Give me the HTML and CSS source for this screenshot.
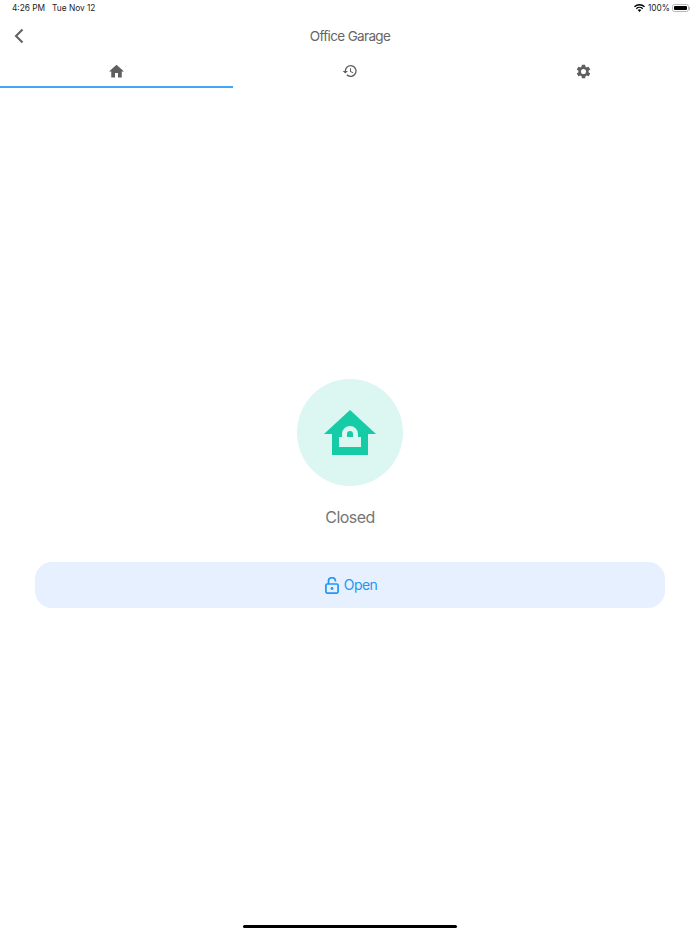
FILE: index.html
```html
<!DOCTYPE html>
<html lang="en">
<head>
    <meta charset="UTF-8">
    <meta name="viewport" content="width=device-width, initial-scale=1.0">
    <title>Office Garage</title>
    <link rel="stylesheet" href="styles.css">
</head>
<body>
<div class="screen">
    <div class="status-bar">
        <div class="status-left">
            <span>4:26 PM</span>
            <span>Tue Nov 12</span>
        </div>
        <div class="status-right">
            <svg class="wifi" width="11" height="8" viewBox="0 0 22 16">
                <path d="M11 16 7.4 12.2a5.2 5.2 0 0 1 7.2 0Z" fill="#000"/>
                <path d="M5.6 10.3 3.7 8.3a10.6 10.6 0 0 1 14.6 0l-1.9 2a7.8 7.8 0 0 0-10.8 0Z" fill="#000"/>
                <path d="M1.9 6.4 0 4.400a16 16 0 0 1 22 0l-1.9 2a13.3 13.3 0 0 0-18.2 0Z" fill="#000"/>
            </svg>
            <span>100%</span>
            <div class="battery"><div class="battery-fill"></div></div>
            <div class="battery-nub"></div>
        </div>
    </div>

    <header class="top-bar">
        <button class="back-button" aria-label="Back">
            <svg width="12" height="16" viewBox="0 0 12 16" fill="none">
                <path d="M9.500 1.500 3 8l6.500 6.500" stroke="#5f5f5f" stroke-width="2"/>
            </svg>
        </button>
        <h1>Office Garage</h1>
    </header>

    <nav class="tabs">
        <div class="tab active">
            <svg width="15" height="15" viewBox="2 3 20 18"><path d="M10 20v-6h4v6h5v-8h3L12 3 2 12h3v8z" fill="#5f5f5f"/></svg>
        </div>
        <div class="tab">
            <svg width="16" height="16" viewBox="0 0 24 24"><path d="M13 3a9 9 0 0 0-9 9H1l3.900 3.900L9 12H6a7 7 0 1 1 2.050 4.950l-1.420 1.420A9 9 0 1 0 13 3Zm-1 5v5l4.280 2.540.72-1.210-3.500-2.080V8Z" fill="#5f5f5f"/></svg>
        </div>
        <div class="tab">
            <svg width="17" height="17" viewBox="0 0 24 24"><path d="M19.140 12.940a7.100 7.100 0 0 0 0-1.880l2.030-1.580a.5.5 0 0 0 .12-.64l-1.920-3.320a.5.5 0 0 0-.61-.22l-2.390.96a7 7 0 0 0-1.620-.94l-.36-2.540a.5.5 0 0 0-.49-.42h-3.840a.5.5 0 0 0-.49.42l-.36 2.540a7.300 7.300 0 0 0-1.620.94l-2.390-.96a.5.5 0 0 0-.61.22L2.710 8.840a.5.5 0 0 0 .12.64l2.030 1.580a7.100 7.100 0 0 0 0 1.880l-2.030 1.580a.5.5 0 0 0-.12.64l1.920 3.320c.13.22.39.3.61.22l2.390-.96c.5.38 1.040.7 1.620.94l.36 2.540c.05.24.25.42.49.42h3.840c.24 0 .44-.18.49-.42l.36-2.540a7.300 7.300 0 0 0 1.620-.94l2.390.96c.22.08.48 0 .61-.22l1.920-3.320a.5.5 0 0 0-.12-.64ZM12 15.600a3.600 3.600 0 1 1 0-7.200 3.600 3.600 0 0 1 0 7.200Z" fill="#5f5f5f"/></svg>
        </div>
    </nav>

    <main class="door-panel">
        <div class="door-circle">
            <svg width="54" height="46" viewBox="0 0 54 46">
                <path fill-rule="evenodd" fill="#16cca6" d="M27 0 53 24H45V45H9V24H1ZM16 37V27H19V24A8 8 0 0 1 35 24V27H38V37ZM24 27H30V24A3 3 0 0 0 24 24Z"/>
            </svg>
        </div>
        <p class="door-state">Closed</p>
        <button class="open-button">
            <svg width="14" height="17" viewBox="0 0 14 17" fill="none">
                <path d="M3.500 7V4.400A3.500 3.500 0 0 1 10.400 3.400V4.400" stroke="#2196f3" stroke-width="1.700"/>
                <rect x="0.900" y="7" width="12.200" height="9.100" rx="1.300" stroke="#2196f3" stroke-width="1.700"/>
                <circle cx="7" cy="11.500" r="1.400" fill="#2196f3"/>
            </svg>
            <span class="open-label">Open</span>
        </button>
    </main>

    <div class="home-indicator"></div>
</div>
</body>
</html>
```

FILE: styles.css
```css
/* Global Styles */
body {
    font-family: 'Inter', 'Liberation Sans', sans-serif;
    background-color: white;
    margin: 0;
    padding: 0;
}

.screen {
    height: 934px;
    display: flex;
    flex-direction: column;
    overflow: hidden;
}

.status-bar {
    height: 16px;
    padding: 0 10px 0 12px;
    display: flex;
    justify-content: space-between;
    align-items: center;
    font-size: 8.3px;
    color: #222;
}

.status-left {
    display: flex;
    gap: 7px;
}

.status-right {
    display: flex;
    align-items: center;
    gap: 2px;
}

.wifi {
    margin-right: 1px;
}

.battery {
    width: 17px;
    height: 8px;
    padding: 1px;
    box-sizing: border-box;
    border: 1px solid #b5b5b5;
    border-radius: 2.5px;
}

.battery-fill {
    height: 100%;
    width: 100%;
    background-color: black;
    border-radius: 1px;
}

.battery-nub {
    width: 1px;
    height: 3px;
    margin-left: -2px;
    background-color: #b5b5b5;
}

.top-bar {
    height: 40px;
    display: flex;
    align-items: center;
    justify-content: center;
    position: relative;
}

.top-bar h1 {
    margin: 0;
    font-size: 13.5px;
    font-weight: 400;
    letter-spacing: -0.65px;
    color: #666;
}

.back-button {
    position: absolute;
    left: 13px;
    top: 12px;
    padding: 0;
    border: none;
    background: none;
    line-height: 0;
}

.tabs {
    display: grid;
    grid-template-columns: repeat(3, 1fr);
    height: 32px;
}

.tab {
    display: flex;
    align-items: center;
    justify-content: center;
    padding-bottom: 2px;
    box-sizing: border-box;
}

.tab.active {
    border-bottom: 2px solid #42a5f5;
    padding-bottom: 0;
}

.door-panel {
    flex: 1;
    display: flex;
    flex-direction: column;
    align-items: center;
    padding: 291px 35px 0;
}

.door-circle {
    width: 106px;
    height: 107px;
    border-radius: 50%;
    background-color: #dcf6f1;
    display: flex;
    align-items: center;
    justify-content: center;
}

.door-state {
    margin: 21px 0 35px;
    font-size: 16px;
    line-height: 20px;
    letter-spacing: -0.55px;
    color: #757575;
}

.open-button {
    width: 100%;
    height: 46px;
    padding: 0 0 0 2px;
    display: flex;
    align-items: center;
    justify-content: center;
    gap: 5px;
    background-color: #e6f0fe;
    border: none;
    border-radius: 17px;
    font-family: inherit;
    font-size: 14px;
    letter-spacing: -0.6px;
    color: #2196f3;
}

.open-label {
    padding-bottom: 2px;
}

.home-indicator {
    align-self: center;
    width: 214px;
    height: 3px;
    margin-bottom: 6px;
    background-color: black;
    border-radius: 2px;
}
```
